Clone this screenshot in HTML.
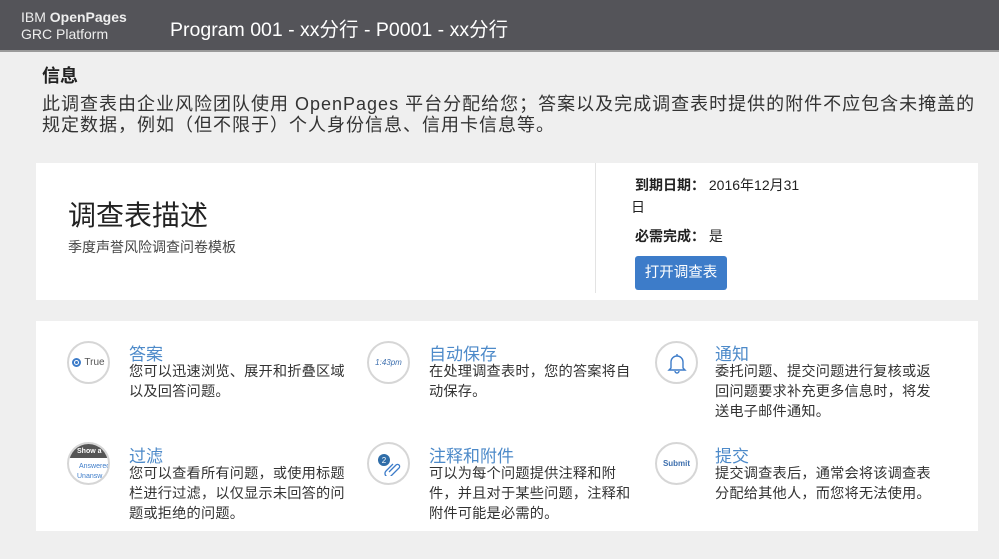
<!DOCTYPE html>
<html><head><meta charset="utf-8"><style>
*{margin:0;padding:0;box-sizing:border-box}
body{width:999px;height:559px;background:#efefef;font-family:"Liberation Sans","Noto Sans CJK SC",sans-serif;color:#333;position:relative;overflow:hidden}
.hdr{position:absolute;left:0;top:0;width:999px;height:52px;background:#545459;border-bottom:2px solid #9a9a9a;color:#fff}
.logo{position:absolute;left:21px;top:9px;font-size:14px;line-height:17px;color:#eee}
.ptitle{position:absolute;left:170px;top:13px;font-size:19.5px}
.info{position:absolute;left:42px;top:65px}
.info h3{font-size:18px;font-weight:bold;color:#222;line-height:22px}
.info p{font-size:18px;letter-spacing:1px;line-height:21px;color:#333;margin-top:7px;white-space:nowrap}
.card{position:absolute;background:#fff}
.c1{left:36px;top:163px;width:942px;height:137px}
.div{position:absolute;left:559px;top:0;width:1px;height:130px;background:#e3e3e3}
.c1 h1{position:absolute;left:32px;top:31px;font-size:28px;font-weight:normal;color:#222}
.c1 .sub{position:absolute;left:32px;top:74px;font-size:14px;color:#444}
.r{position:absolute;left:599px;font-size:14px;color:#222}
.r b{font-weight:bold}
.btn{position:absolute;left:599px;top:93px;width:92px;height:34px;background:#3d7cc9;border-radius:3px;color:#fff;font-size:14.5px;line-height:34px;text-align:center}
.c2{left:36px;top:321px;width:942px;height:210px}
.ic{position:absolute;width:43px;height:43px;border-radius:50%;border:2px solid #d6d6d6;background:#fff;overflow:hidden;display:flex;align-items:center;justify-content:center;font-size:8px}
.t{position:absolute;font-size:17px;color:#4d8ac9;white-space:nowrap}
.d{position:absolute;font-size:14.2px;letter-spacing:0.2px;line-height:20px;color:#333;white-space:nowrap}
</style></head><body>
<div class="hdr"><div class="logo">IBM <b>OpenPages</b><br>GRC Platform</div><div class="ptitle">Program 001 - xx分行 - P0001 - xx分行</div></div>
<div class="info"><h3>信息</h3><p>此调查表由企业风险团队使用 OpenPages 平台分配给您；答案以及完成调查表时提供的附件不应包含未掩盖的<br>规定数据，例如（但不限于）个人身份信息、信用卡信息等。</p></div>
<div class="card c1"><div class="div"></div><h1>调查表描述</h1><div class="sub">季度声誉风险调查问卷模板</div>
<div class="r" style="top:12px"><b>到期日期：</b> 2016年12月31</div>
<div class="r" style="top:34px;left:595px">日</div>
<div class="r" style="top:63px"><b>必需完成：</b> 是</div>
<div class="btn">打开调查表</div></div>
<div class="card c2">
<div class="ic" style="left:31px;top:20px"><span style="display:inline-block;width:9px;height:9px;border-radius:50%;border:2px solid #3d7cc9;background:radial-gradient(#3d7cc9 40%,#fff 45%);margin-right:3px"></span><span style="font-size:10px;color:#555">True</span></div>
<div class="t" style="left:93px;top:19px">答案</div>
<div class="d" style="left:93px;top:41px">您可以迅速浏览、展开和折叠区域<br>以及回答问题。</div>
<div class="ic" style="left:331px;top:20px;color:#3d6fae;font-style:italic">1:43pm</div>
<div class="t" style="left:393px;top:19px">自动保存</div>
<div class="d" style="left:393px;top:41px">在处理调查表时，您的答案将自<br>动保存。</div>
<div class="ic" style="left:619px;top:20px"><svg width="20" height="22" viewBox="0 0 20 22"><path d="M4 16V10a6 6 0 0 1 12 0v6l2 2H2z M8 19a2 2 0 0 0 4 0 M10 2v2" fill="none" stroke="#3d7cc9" stroke-width="1.4"/></svg></div>
<div class="t" style="left:679px;top:19px">通知</div>
<div class="d" style="left:679px;top:41px">委托问题、提交问题进行复核或返<br>回问题要求补充更多信息时，将发<br>送电子邮件通知。</div>
<div class="ic" style="left:31px;top:121px;display:block;font-size:7px;line-height:10px"><div style="background:#555;color:#fff;padding:3px 0 1px 8px;font-weight:bold">Show a</div><div style="color:#3d7cc9;padding-left:10px;margin-top:4px">Answered</div><div style="color:#3d7cc9;padding-left:8px">Unansw</div></div>
<div class="t" style="left:93px;top:121px">过滤</div>
<div class="d" style="left:93px;top:143px">您可以查看所有问题，或使用标题<br>栏进行过滤，以仅显示未回答的问<br>题或拒绝的问题。</div>
<div class="ic" style="left:331px;top:121px"><svg width="28" height="24" viewBox="0 0 28 24"><circle cx="9" cy="8" r="6" fill="#2f6da8"/><text x="9" y="11" font-size="8" fill="#fff" text-anchor="middle" font-family="Liberation Sans">2</text><path d="M14 20l7-7a2 2 0 0 1 3 3l-8 8a3.5 3.5 0 0 1-5-5l7-7" fill="none" stroke="#3d7cc9" stroke-width="1.3"/></svg></div>
<div class="t" style="left:393px;top:121px">注释和附件</div>
<div class="d" style="left:393px;top:143px">可以为每个问题提供注释和附<br>件，并且对于某些问题，注释和<br>附件可能是必需的。</div>
<div class="ic" style="left:619px;top:121px;color:#3d6fae;font-weight:bold">Submit</div>
<div class="t" style="left:679px;top:121px">提交</div>
<div class="d" style="left:679px;top:143px">提交调查表后，通常会将该调查表<br>分配给其他人，而您将无法使用。</div>
</div>
</body></html>
